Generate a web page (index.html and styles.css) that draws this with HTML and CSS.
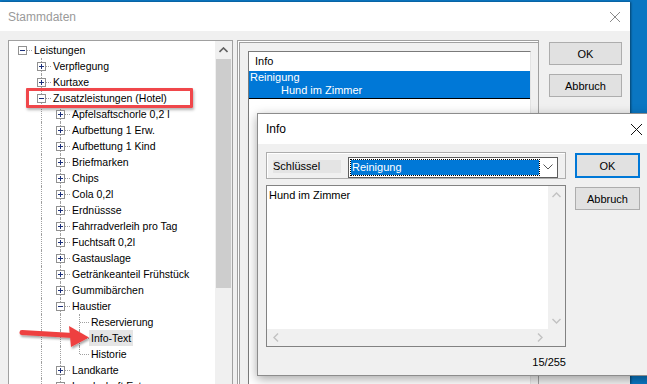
FILE: index.html
```html
<!DOCTYPE html>
<html lang="de">
<head>
    <meta charset="UTF-8">
    <title>Stammdaten</title>
    <link rel="stylesheet" href="styles.css">
</head>
<body>
    <div class="screen">
        <div class="window">
            <div class="titlebar">
                <span>Stammdaten</span>
                <svg class="close" width="10" height="10" viewBox="0 0 10 10"><path d="M0 0L10 10M10 0L0 10" stroke="#8a8a8a" stroke-width="1"/></svg>
            </div>
            <div class="main">
                <div class="tree">
                    <div class="tree-items">
                        <div class="row"><i class="c r"><b class="box minus"></b></i><span>Leistungen</span></div>
                        <div class="row"><i class="c"></i><i class="c t"><b class="box plus"></b></i><span>Verpflegung</span></div>
                        <div class="row"><i class="c"></i><i class="c t"><b class="box plus"></b></i><span>Kurtaxe</span></div>
                        <div class="row"><i class="c"></i><i class="c t"><b class="box minus"></b></i><span>Zusatzleistungen (Hotel)</span></div>
                        <div class="row"><i class="c"></i><i class="c v"></i><i class="c t"><b class="box plus"></b></i><span>Apfelsaftschorle 0,2 l</span></div>
                        <div class="row"><i class="c"></i><i class="c v"></i><i class="c t"><b class="box plus"></b></i><span>Aufbettung 1 Erw.</span></div>
                        <div class="row"><i class="c"></i><i class="c v"></i><i class="c t"><b class="box plus"></b></i><span>Aufbettung 1 Kind</span></div>
                        <div class="row"><i class="c"></i><i class="c v"></i><i class="c t"><b class="box plus"></b></i><span>Briefmarken</span></div>
                        <div class="row"><i class="c"></i><i class="c v"></i><i class="c t"><b class="box plus"></b></i><span>Chips</span></div>
                        <div class="row"><i class="c"></i><i class="c v"></i><i class="c t"><b class="box plus"></b></i><span>Cola 0,2l</span></div>
                        <div class="row"><i class="c"></i><i class="c v"></i><i class="c t"><b class="box plus"></b></i><span>Erdnüssse</span></div>
                        <div class="row"><i class="c"></i><i class="c v"></i><i class="c t"><b class="box plus"></b></i><span>Fahrradverleih pro Tag</span></div>
                        <div class="row"><i class="c"></i><i class="c v"></i><i class="c t"><b class="box plus"></b></i><span>Fuchtsaft 0,2l</span></div>
                        <div class="row"><i class="c"></i><i class="c v"></i><i class="c t"><b class="box plus"></b></i><span>Gastauslage</span></div>
                        <div class="row"><i class="c"></i><i class="c v"></i><i class="c t"><b class="box plus"></b></i><span>Getränkeanteil Frühstück</span></div>
                        <div class="row"><i class="c"></i><i class="c v"></i><i class="c t"><b class="box plus"></b></i><span>Gummibärchen</span></div>
                        <div class="row"><i class="c"></i><i class="c v"></i><i class="c t"><b class="box minus"></b></i><span>Haustier</span></div>
                        <div class="row"><i class="c"></i><i class="c v"></i><i class="c v"></i><i class="c t"></i><span>Reservierung</span></div>
                        <div class="row"><i class="c"></i><i class="c v"></i><i class="c v"></i><i class="c t"></i><span class="hover">Info-Text</span></div>
                        <div class="row"><i class="c"></i><i class="c v"></i><i class="c v"></i><i class="c l"></i><span>Historie</span></div>
                        <div class="row"><i class="c"></i><i class="c v"></i><i class="c t"><b class="box plus"></b></i><span>Landkarte</span></div>
                        <div class="row"><i class="c"></i><i class="c v"></i><i class="c t"><b class="box plus"></b></i><span>Landschaft Extra</span></div>
                    </div>
                    <div class="scroll">
                        <div class="scroll-up">
                            <svg width="9" height="6" viewBox="0 0 9 6"><path d="M0.5 5L4.5 1L8.5 5" fill="none" stroke="#606060" stroke-width="1.6"/></svg>
                        </div>
                        <div class="thumb"></div>
                    </div>
                </div>
                <div class="panel">
                    <div class="list">
                        <div class="list-head">Info</div>
                        <div class="list-sel">
                            <div>Reinigung</div>
                            <div class="sub">Hund im Zimmer</div>
                        </div>
                    </div>
                </div>
                <div class="buttons">
                    <button class="btn">OK</button>
                    <button class="btn">Abbruch</button>
                </div>
            </div>
        </div>
    </div>

    <div class="dialog">
        <div class="dlg-title">
            <span>Info</span>
            <svg class="close" width="11" height="11" viewBox="0 0 11 11"><path d="M0 0L11 11M11 0L0 11" stroke="#111" stroke-width="1"/></svg>
        </div>
        <div class="dlg-body">
            <div class="dlg-left">
                <div class="keybox">
                    <span class="key-label">Schlüssel</span>
                    <div class="combo">
                        <span class="combo-sel">Reinigung</span>
                        <span class="combo-arrow">
                            <svg width="10" height="6" viewBox="0 0 10 6"><path d="M0.5 0.5L5 5L9.5 0.5" fill="none" stroke="#555" stroke-width="1"/></svg>
                        </span>
                    </div>
                </div>
                <div class="memo">
                    <div class="memo-text">Hund im Zimmer</div>
                    <div class="vscroll">
                        <span class="arr"><svg width="9" height="6" viewBox="0 0 9 6"><path d="M0.5 5L4.5 1L8.5 5" fill="none" stroke="#c2c2c2" stroke-width="1.4"/></svg></span>
                        <span class="arr"><svg width="9" height="6" viewBox="0 0 9 6"><path d="M0.5 1L4.5 5L8.5 1" fill="none" stroke="#c2c2c2" stroke-width="1.4"/></svg></span>
                    </div>
                    <div class="hscroll">
                        <span class="arr"><svg width="6" height="9" viewBox="0 0 6 9"><path d="M5 0.5L1 4.5L5 8.5" fill="none" stroke="#c2c2c2" stroke-width="1.4"/></svg></span>
                        <span class="arr"><svg width="6" height="9" viewBox="0 0 6 9"><path d="M1 0.5L5 4.5L1 8.5" fill="none" stroke="#c2c2c2" stroke-width="1.4"/></svg></span>
                    </div>
                    <div class="corner"></div>
                </div>
                <div class="counter">15/255</div>
            </div>
            <div class="dlg-buttons">
                <button class="btn default">OK</button>
                <button class="btn">Abbruch</button>
            </div>
        </div>
    </div>

    <!-- annotations drawn over the screenshot -->
    <div class="mark"></div>
    <svg class="arrow" width="80" height="32" viewBox="0 0 80 32">
        <defs>
            <filter id="sh" x="-20%" y="-30%" width="140%" height="170%">
                <feDropShadow dx="1" dy="2" stdDeviation="1.2" flood-color="#000" flood-opacity="0.35"/>
            </filter>
        </defs>
        <g filter="url(#sh)" fill="#ee4040">
            <path d="M5 10.5L56 13.5" stroke="#ee4040" stroke-width="5" stroke-linecap="round"/>
            <polygon points="52,4 72,15.5 54,25"/>
        </g>
    </svg>
</body>
</html>
```

FILE: styles.css
```css
body {
    margin: 0;
    width: 647px;
    height: 384px;
    overflow: hidden;
    background-color: #0a76c2;
    font-family: "Liberation Sans", Arial, sans-serif;
    font-size: 11px;
    color: #000;
}

.screen {
    padding-top: 2px;
    display: flex;
}

.window {
    width: 630px;
    height: 382px;
    background-color: #f0f0f0;
    display: flex;
    flex-direction: column;
    box-shadow: 1px 0 2px rgba(0, 0, 0, 0.45);
}

.titlebar {
    height: 29px;
    background-color: #fff;
    display: flex;
    align-items: center;
    padding: 0 10px 0 8px;
    color: #9a9a9a;
    font-size: 12px;
}

.titlebar .close {
    margin-left: auto;
}

.main {
    flex: 1;
    min-height: 0;
    display: flex;
    padding: 9px 8px 0 8px;
}

/* tree */

.tree {
    width: 223px;
    border: 1px solid #a0a0a0;
    border-bottom: none;
    background-color: #fff;
    display: flex;
    overflow: hidden;
}

.tree-items {
    flex: 1;
    padding: 1px 0 0 4px;
    font-size: 10.5px;
}

.row {
    display: flex;
    height: 16px;
    line-height: 16px;
    white-space: nowrap;
}

.row span {
    padding: 0 2px;
}

.row .hover {
    background-color: #e5e5e5;
}

.c {
    position: relative;
    flex: none;
    width: 19px;
    height: 16px;
}

.c.v::before,
.c.t::before,
.c.l::before {
    content: '';
    position: absolute;
    left: 9px;
    top: 0;
    bottom: 0;
    border-left: 1px dotted #a0a0a0;
}

.c.l::before {
    bottom: 8px;
}

.c.t::after,
.c.l::after,
.c.r::after {
    content: '';
    position: absolute;
    left: 10px;
    right: 0;
    top: 8px;
    border-top: 1px dotted #a0a0a0;
}

.box {
    position: absolute;
    left: 5px;
    top: 4px;
    width: 7px;
    height: 7px;
    border: 1px solid #919191;
    background-color: #fff;
    z-index: 1;
}

.box::before {
    content: '';
    position: absolute;
    left: 1px;
    top: 3px;
    width: 5px;
    height: 1px;
    background-color: #1b2f7a;
}

.box.plus::after {
    content: '';
    position: absolute;
    left: 3px;
    top: 1px;
    width: 1px;
    height: 5px;
    background-color: #1b2f7a;
}

.scroll {
    width: 17px;
    background-color: #f0f0f0;
    display: flex;
    flex-direction: column;
}

.scroll-up {
    height: 17px;
    display: flex;
    align-items: center;
    justify-content: center;
}

.thumb {
    height: 229px;
    margin: 1px 1px 0 1px;
    background-color: #cdcdcd;
}

/* right panel */

.panel {
    width: 283px;
    margin-left: 4px;
    padding: 10px 7px 0 10px;
    border: 1px solid #a0a0a0;
    border-bottom: none;
    box-shadow: inset 1px 1px 0 #fff, inset 2px 2px 0 #a0a0a0;
    display: flex;
}

.list {
    flex: 1;
    background-color: #fff;
    border: 1px solid #7a7a7a;
    border-right-color: #e3e3e3;
    border-bottom: none;
}

.list-head {
    height: 19px;
    line-height: 19px;
    padding-left: 6px;
}

.list-sel {
    background-color: #0078d7;
    color: #fff;
    padding: 0 0 1px 1px;
    border-bottom: 1px solid #000;
}

.list-sel div {
    height: 13px;
    line-height: 13px;
}

.list-sel .sub {
    padding-left: 31px;
}

.buttons {
    margin-left: 10px;
    padding-top: 2px;
    display: flex;
    flex-direction: column;
    gap: 9px;
}

.btn {
    box-sizing: border-box;
    width: 73px;
    height: 23px;
    padding: 0;
    background-color: #e1e1e1;
    border: 1px solid #adadad;
    font-family: inherit;
    font-size: 11px;
    color: #000;
}

/* info dialog */

.dialog {
    position: absolute;
    left: 257px;
    top: 113px;
    width: 398px;
    height: 261px;
    background-color: #f0f0f0;
    border: 1px solid #8c8c8c;
    box-shadow: 0 3px 10px rgba(0, 0, 0, 0.35);
}

.dlg-title {
    height: 30px;
    background-color: #fff;
    display: flex;
    align-items: center;
    padding: 0 14px 0 8px;
    font-size: 12px;
}

.dlg-title .close {
    margin-left: auto;
}

.dlg-body {
    display: flex;
    gap: 9px;
    padding: 8px 0 0 8px;
}

.dlg-left {
    width: 300px;
    display: flex;
    flex-direction: column;
}

.keybox {
    box-sizing: border-box;
    height: 27px;
    border: 1px solid #adadad;
    box-shadow: inset 1px 1px 0 #fff;
    display: flex;
    align-items: center;
    gap: 7px;
    padding: 1px 7px 0 6px;
}

.key-label {
    width: 68px;
    height: 13px;
    line-height: 13px;
    background-color: #e4e4e4;
}

.combo {
    box-sizing: border-box;
    flex: 1;
    height: 21px;
    margin-top: 2px;
    padding: 2px 0 2px 2px;
    border: 1px solid #5c5c5c;
    background-color: #fff;
    display: flex;
}

.combo-sel {
    flex: 1;
    line-height: 15px;
    padding-left: 1px;
    background-color: #0078d7;
    color: #fff;
    outline: 1px dotted #000;
}

.combo-arrow {
    width: 18px;
    display: flex;
    align-items: center;
    justify-content: center;
}

.memo {
    box-sizing: border-box;
    height: 162px;
    margin-top: 6px;
    border: 1px solid #828282;
    display: grid;
    grid-template-columns: 1fr 17px;
    grid-template-rows: 1fr 17px;
}

.memo-text {
    background-color: #fff;
    padding: 3px 2px;
    line-height: 13px;
}

.vscroll,
.hscroll,
.corner {
    background-color: #f0f0f0;
}

.vscroll {
    display: flex;
    flex-direction: column;
    justify-content: space-between;
}

.hscroll {
    display: flex;
    justify-content: space-between;
}

.arr {
    width: 17px;
    height: 17px;
    display: flex;
    align-items: center;
    justify-content: center;
}

.counter {
    margin-top: 8px;
    text-align: right;
    line-height: 14px;
}

.dlg-buttons {
    padding-top: 1px;
    display: flex;
    flex-direction: column;
    gap: 9px;
}

.dlg-buttons .btn {
    width: 65px;
}

.btn.default {
    height: 25px;
    border: 2px solid #0078d7;
}

/* annotations */

.mark {
    position: absolute;
    left: 26px;
    top: 88px;
    width: 167px;
    height: 20px;
    box-sizing: border-box;
    border: 3px solid #f0474b;
    border-radius: 1px;
    box-shadow: 1px 2px 3px rgba(0, 0, 0, 0.3);
}

.arrow {
    position: absolute;
    left: 17px;
    top: 322px;
}
```
